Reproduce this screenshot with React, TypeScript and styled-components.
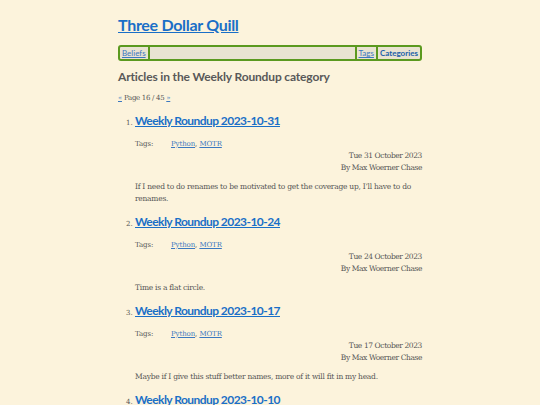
import React from 'react'
import styled, { createGlobalStyle } from 'styled-components'

const GlobalStyle = createGlobalStyle`
  html, body {
    margin: 0;
    padding: 0;
    background: #fcf3dc;
  }
`

const Page = styled.div`
  width: 304px;
  margin: 0 auto;
  padding-top: 15px;
  font-family: 'DejaVu Serif', serif;
  font-size: 7.5px;
  color: #555;
`

const SiteTitle = styled.a`
  display: block;
  font-family: Lato, sans-serif;
  font-weight: 700;
  font-size: 16px;
  letter-spacing: -0.3px;
  line-height: 20px;
  color: #1a6fc7;
  text-decoration: underline;
  margin-bottom: 10px;
`

const Nav = styled.nav`
  display: flex;
  align-items: stretch;
  height: 12px;
  border: 2px solid #5b991f;
  border-radius: 3px;
  background: #e9e3d1;
  font-family: Lato, sans-serif;
  font-size: 8px;
  line-height: 12px;
`

const NavLink = styled.a<{ $active?: boolean; $first?: boolean }>`
  padding: 0 2px;
  color: ${p => (p.$active ? '#1b5fa8' : '#3b78c0')};
  font-weight: ${p => (p.$active ? 700 : 400)};
  text-decoration: ${p => (p.$active ? 'none' : 'underline')};
  border-left: ${p => (p.$first ? 'none' : '2px solid #5b991f')};
`

const NavSpacer = styled.div`
  flex: 1;
  border-left: 2px solid #5b991f;
`

const Heading = styled.h2`
  font-family: Lato, sans-serif;
  font-weight: 700;
  font-size: 12px;
  letter-spacing: -0.15px;
  line-height: 16px;
  color: #595959;
  margin: 8px 0 0;
`

const Pager = styled.div`
  margin-top: 8px;
  font-size: 7px;
  letter-spacing: -0.3px;
  line-height: 10px;
`

const PagerLink = styled.a`
  color: #3b78c0;
  text-decoration: underline;
`

const List = styled.ol`
  margin: 10px 0 0;
  padding-left: 17px;
`

const Item = styled.li`
  font-size: 7px;
  margin-bottom: 9px;
`

const ItemTitle = styled.a`
  font-family: Lato, sans-serif;
  font-weight: 700;
  font-size: 12px;
  letter-spacing: -0.55px;
  line-height: 16px;
  color: #1a6fc7;
  text-decoration: underline;
`

const TagRow = styled.div`
  display: flex;
  margin-top: 10px;
  line-height: 10px;
  letter-spacing: -0.1px;
`

const TagLabel = styled.span`
  width: 36px;
`

const TagLink = styled.a`
  color: #3b78c0;
  text-decoration: underline;
`

const Meta = styled.div`
  text-align: right;
  line-height: 12px;
  margin-top: 1px;
  font-size: 7.5px;
  letter-spacing: -0.4px;
`

const Summary = styled.p`
  margin: 7px 0 0;
  line-height: 12px;
  font-size: 7.5px;
  letter-spacing: -0.25px;
`

const articles = [
  {
    title: 'Weekly Roundup 2023-10-31',
    date: 'Tue 31 October 2023',
    summary: 'If I need to do renames to be motivated to get the coverage up, I’ll have to do renames.',
  },
  {
    title: 'Weekly Roundup 2023-10-24',
    date: 'Tue 24 October 2023',
    summary: 'Time is a flat circle.',
  },
  {
    title: 'Weekly Roundup 2023-10-17',
    date: 'Tue 17 October 2023',
    summary: 'Maybe if I give this stuff better names, more of it will fit in my head.',
  },
  {
    title: 'Weekly Roundup 2023-10-10',
    date: 'Tue 10 October 2023',
    summary: '',
  },
]

const App = () => {
  return (
    <>
      <GlobalStyle />
      <Page>
        <SiteTitle href="#">Three Dollar Quill</SiteTitle>
        <Nav>
          <NavLink href="#" $first>Beliefs</NavLink>
          <NavSpacer />
          <NavLink href="#">Tags</NavLink>
          <NavLink href="#" $active>Categories</NavLink>
        </Nav>
        <Heading>Articles in the Weekly Roundup category</Heading>
        <Pager>
          <PagerLink href="#">«</PagerLink> Page 16 / 45 <PagerLink href="#">»</PagerLink>
        </Pager>
        <List>
          {articles.map(a => (
            <Item key={a.title}>
              <ItemTitle href="#">{a.title}</ItemTitle>
              <TagRow>
                <TagLabel>Tags:</TagLabel>
                <span>
                  <TagLink href="#">Python</TagLink>, <TagLink href="#">MOTR</TagLink>
                </span>
              </TagRow>
              <Meta>
                {a.date}
                <br />
                By Max Woerner Chase
              </Meta>
              {a.summary && <Summary>{a.summary}</Summary>}
            </Item>
          ))}
        </List>
      </Page>
    </>
  )
}

export default App
